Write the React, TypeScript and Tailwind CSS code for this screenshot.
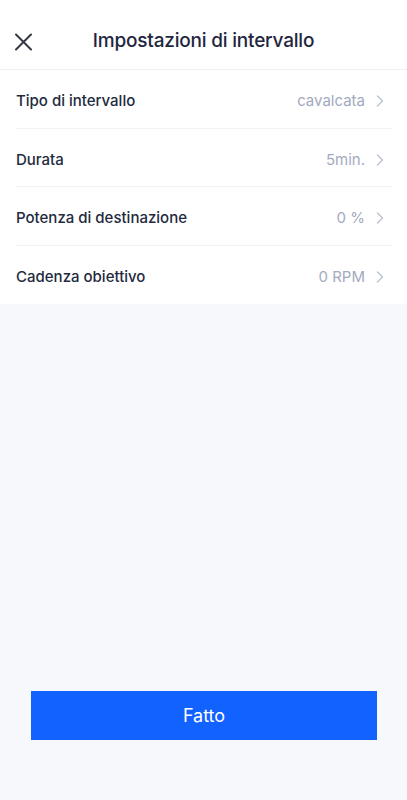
const rows = [
  { label: 'Tipo di intervallo', value: 'cavalcata' },
  { label: 'Durata', value: '5min.' },
  { label: 'Potenza di destinazione', value: '0 %' },
  { label: 'Cadenza obiettivo', value: '0 RPM' },
];

export default function App() {
  return (
    <div
      className="flex min-h-[800px] flex-col bg-[#f7f8fc]"
      style={{ fontFamily: 'Inter, "Liberation Sans", sans-serif' }}
    >
      {/* 头部 */}
      <header className="relative flex h-[70px] items-center justify-center border-b border-[#eef0f5] bg-white pt-[14px]">
        <button className="absolute left-[14px] top-[33px] text-[#333842]">
          <svg width="19" height="18" viewBox="0 0 19 18" fill="none" stroke="currentColor" strokeWidth="2" strokeLinecap="round">
            <path d="M2 1.5 17 16.5M17 1.5 2 16.5" />
          </svg>
        </button>
        <h1 className="text-[19px] font-medium tracking-[-0.2px] text-[#1f2640]">
          Impostazioni di intervallo
        </h1>
      </header>

      {/* 设置列表 */}
      <div className="bg-white pl-[16px] pr-[15px]">
        {rows.map((row, i) => (
          <div
            key={row.label}
            className={`flex h-[58.5px] items-center justify-between pt-[5px] ${
              i < rows.length - 1 ? 'border-b border-[#f1f2f6]' : ''
            }`}
          >
            <span className="text-[15px] font-medium text-[#222a3e]">{row.label}</span>
            <span className="flex items-center gap-[11px] pr-[8px] text-[15px] text-[#a3aac0]">
              {row.value}
              <svg width="8" height="12" viewBox="0 0 8 12" fill="none" stroke="#bcc2d3" strokeWidth="1.4" strokeLinecap="round" strokeLinejoin="round">
                <path d="M1.5 1 6.5 6 1.5 11" />
              </svg>
            </span>
          </div>
        ))}
      </div>

      <div className="flex-1" />

      {/* 完成按钮 */}
      <div className="pb-[60px] pl-[31px] pr-[30px]">
        <button className="h-[49px] w-full bg-[#1262ff] text-[18px] text-white">Fatto</button>
      </div>
    </div>
  );
}
